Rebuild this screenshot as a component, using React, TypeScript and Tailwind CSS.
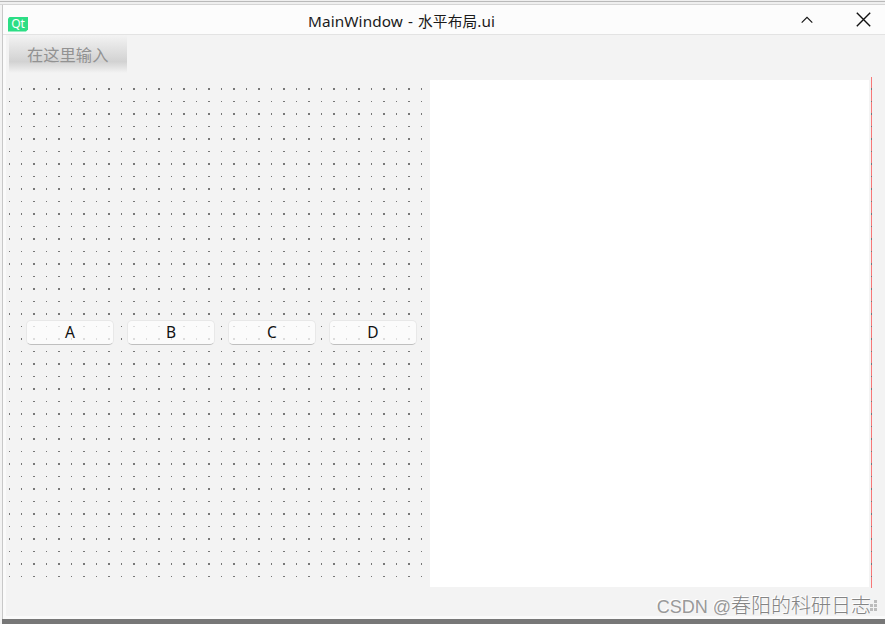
import React from "react";

const sans = "font-['Noto_Sans','Noto_Sans_CJK_SC',sans-serif]";

function TitleBar() {
  return (
    <header className="relative flex h-[30px] shrink-0 items-center border-b border-[#e3e3e3] bg-[#fcfcfc]">
      <div className="ml-[5px] mt-[9px] h-[15px] w-[20px] bg-[#2cde85] text-center font-['Noto_Sans',sans-serif] text-[12px] leading-[14px] text-white [clip-path:polygon(2px_0,100%_0,100%_13px,18px_100%,0_100%,0_2px)]">
        Qt
      </div>
      <h1 className={`ml-[280px] mt-[2px] whitespace-nowrap text-[15.3px] leading-5 tracking-[0.1px] text-[#1a1a1a] ${sans}`}>
        MainWindow<span className="mx-[1px]"> - </span><span className="text-[14.7px]">水平布局</span>.ui
      </h1>
      <svg className="ml-auto mr-[43px]" width="12" height="8" viewBox="0 0 12 8" fill="none" stroke="#111" strokeWidth="1.1">
        <path d="M.7 6.7 6 1.4 11.3 6.7" />
      </svg>
      <svg className="mr-[14px]" width="15" height="15" viewBox="0 0 15 15" fill="none" stroke="#111" strokeWidth="1.4">
        <path d="M.8.8 14.2 14.2M14.2.8.8 14.2" />
      </svg>
    </header>
  );
}

function DotGrid({ originX }: { originX: number }) {
  const id = "dots" + -originX;
  return (
    <svg className="absolute inset-0 h-full w-full" fill="#777" shapeRendering="crispEdges">
      <pattern id={id} x={originX} y="11" width="25" height="25" patternUnits="userSpaceOnUse">
        <rect width="2" height="2" />
        <rect x="13" width="1" height="2" />
        <rect y="13" width="2" height="1" />
        <rect x="13" y="13" width="1" height="1" />
      </pattern>
      <rect y="10" width="100%" height="491" fill={`url(#${id})`} />
    </svg>
  );
}

function PushButton({ label }: { label: string }) {
  return (
    <button className={`h-[25px] w-[88px] rounded-[5px] border border-[#e8e8e8] border-b-[#bfbfbf] bg-[#fdfdfd]/75 text-[15.5px] leading-[23px] text-[#111] ${sans}`}>
      {label}
    </button>
  );
}

export default function App() {
  return (
    <div className="flex h-[624px] w-[885px] flex-col overflow-hidden bg-[#f3f3f3]">
      <div className="h-[5px] shrink-0 border-b border-[#d5d5d5] bg-[#efefef]">
        <div className="h-[2px] border-b border-[#b9b9b9]" />
      </div>
      <div className="ml-[2px] flex h-[614px] flex-col border-b border-l border-[#c8c8c8]">
        <TitleBar />
        <div className="flex grow flex-col border-b-[3px] border-l-[3px] border-[#fafafa]">
          <div className={`ml-[3px] h-[38px] w-[118px] shrink-0 bg-linear-to-b from-[#f3f3f3] via-[#d2d2d2] via-70% to-[#f3f3f3] pl-[18px] text-[16.3px] leading-[40px] text-[#929292] ${sans}`}>
            在这里输入
          </div>
          <main className="mt-[4px] flex h-[511px]">
            <section className="relative ml-[3px] w-[421px]">
              <DotGrid originX={-1} />
              <div className="relative flex gap-[13px] pl-[17px] pt-[243px]">
                {["A", "B", "C", "D"].map((x) => <PushButton key={x} label={x} />)}
              </div>
            </section>
            <section className="mb-[1px] mt-[3px] w-[439px] bg-white" />
            <div className="relative ml-[2px] w-px bg-[#f87878]">
              <DotGrid originX={-13} />
            </div>
          </main>
          <footer className="flex h-[28px] items-center justify-end">
            <span className="mr-[-1px] mt-[8px] whitespace-nowrap font-['Liberation_Sans','Noto_Sans_CJK_SC',sans-serif] text-[20px] font-light leading-6 text-[#848484] [text-shadow:-1px_-1px_0_#fff]">
              <span className="text-[18px] text-[#999]">CSDN @</span>春阳的科研日志
            </span>
            <svg className="mr-[7px] mt-[7px]" width="8" height="12" fill="#bcbcbc">
              <path d="M4 0h3v3H4zM0 4h3v3H0zM4 4h3v3H4zM0 8h3v3H0zM4 8h3v3H4z" />
            </svg>
          </footer>
        </div>
      </div>
      <div className="ml-[2px] grow bg-[#777]" />
    </div>
  );
}
